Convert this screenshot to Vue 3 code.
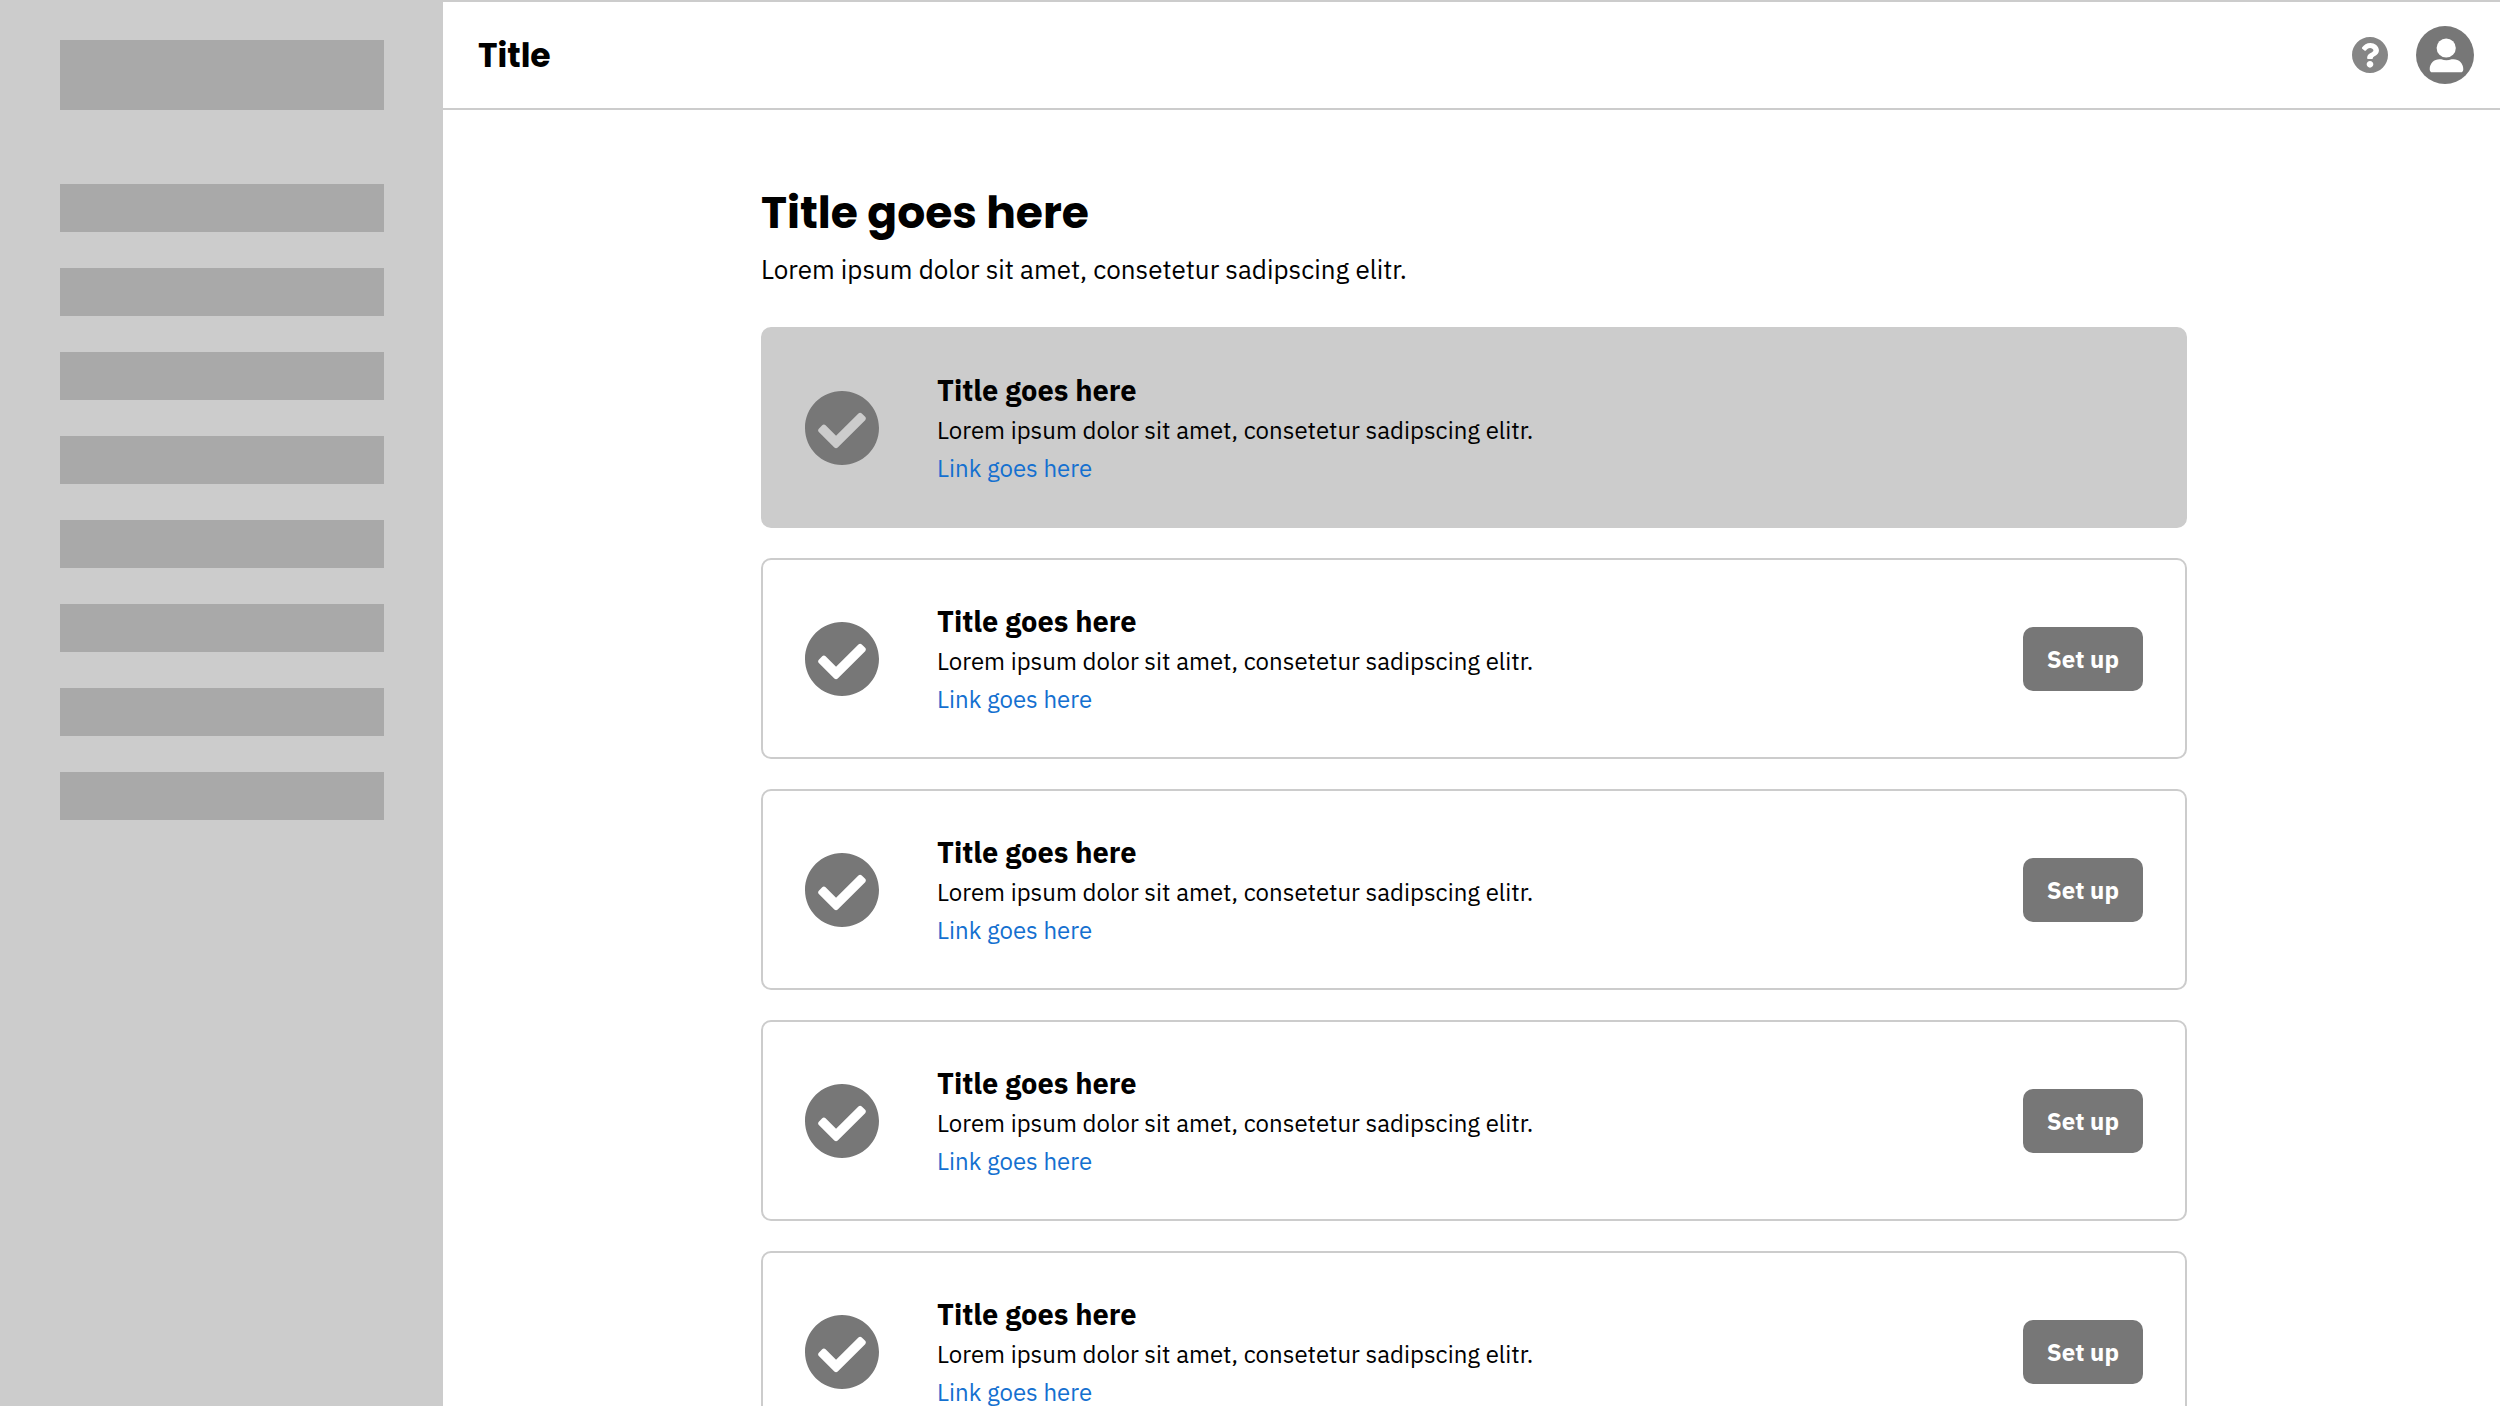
<script setup>
const navItems = Array.from({ length: 8 }, (_, i) => i)

const lorem = 'Lorem ipsum dolor sit amet, consetetur sadipscing elitr.'
const steps = [
  { id: 1, title: 'Title goes here', text: lorem, link: 'Link goes here', done: true },
  { id: 2, title: 'Title goes here', text: lorem, link: 'Link goes here', done: false },
  { id: 3, title: 'Title goes here', text: lorem, link: 'Link goes here', done: false },
  { id: 4, title: 'Title goes here', text: lorem, link: 'Link goes here', done: false },
  { id: 5, title: 'Title goes here', text: lorem, link: 'Link goes here', done: false }
]
</script>

<template>
  <div class="layout">
    <aside class="sidebar">
      <div class="logo"></div>
      <nav class="nav">
        <div v-for="item in navItems" :key="item" class="nav-item"></div>
      </nav>
    </aside>

    <div class="page">
      <header class="topbar">
        <h1 class="topbar-title">Title</h1>
        <div class="actions">
          <button class="icon-button" type="button" aria-label="Help">
            <svg class="help-icon" viewBox="8 8 496 496" aria-hidden="true">
              <path fill="#868686" d="M504 256c0 136.997-111.043 248-248 248S8 392.997 8 256C8 119.083 119.043 8 256 8s248 111.083 248 248zM262.655 90c-54.497 0-89.255 22.957-116.549 63.758-3.536 5.286-2.353 12.415 2.715 16.258l34.699 26.31c5.205 3.947 12.621 3.008 16.665-2.122 17.864-22.658 30.113-35.797 57.303-35.797 20.429 0 45.698 13.148 45.698 32.958 0 14.976-12.363 22.667-32.534 33.976C247.128 238.528 216 254.941 216 296v4c0 6.627 5.373 12 12 12h56c6.627 0 12-5.373 12-12v-1.333c0-28.462 83.186-29.647 83.186-106.667 0-58.002-60.165-102-116.531-102zM256 338c-25.365 0-46 20.635-46 46 0 25.364 20.635 46 46 46s46-20.636 46-46c0-25.364-20.635-46-46-46z" />
            </svg>
          </button>
          <button class="icon-button" type="button" aria-label="Account">
            <svg class="avatar-icon" viewBox="0 0 58 58" aria-hidden="true">
              <circle cx="29" cy="29" r="29" fill="#777" />
              <circle cx="30.2" cy="22" r="9.6" fill="#fff" />
              <path fill="#fff" d="M13.7 43.2C13.7 37.4 18 33.3 23.5 33.3h1.7q5.2 2 10.4 0h1.9C43 33.3 47.3 37.4 47.3 43.2q0 3.1-2.8 3.1H16.5q-2.8 0-2.8-3.1z" />
            </svg>
          </button>
        </div>
      </header>

      <main class="content">
        <h2 class="heading">Title goes here</h2>
        <p class="intro">{{ lorem }}</p>

        <ul class="steps">
          <li v-for="step in steps" :key="step.id" class="step" :class="{ done: step.done }">
            <svg class="check" viewBox="8 8 496 496" aria-hidden="true">
              <path d="M504 256c0 136.967-111.033 248-248 248S8 392.967 8 256 119.033 8 256 8s248 111.033 248 248zM227.314 387.314l184-184c6.248-6.248 6.248-16.379 0-22.627l-22.627-22.627c-6.248-6.248-16.379-6.249-22.628 0L216 308.118l-70.059-70.059c-6.248-6.248-16.379-6.248-22.628 0l-22.627 22.627c-6.248 6.248-6.248 16.379 0 22.627l104 104c6.249 6.249 16.379 6.249 22.628.001z" />
            </svg>
            <div class="step-body">
              <h3 class="step-title">{{ step.title }}</h3>
              <p class="step-text">{{ step.text }}</p>
              <a class="step-link" href="#">{{ step.link }}</a>
            </div>
            <button v-if="!step.done" class="setup" type="button">Set up</button>
          </li>
        </ul>
      </main>
    </div>
  </div>
</template>

<style>
body {
  margin: 0;
  background: #fff;
}
</style>

<style scoped>
.layout {
  display: flex;
  height: 100vh;
  overflow: hidden;
  color: #000;
  font-family: "IBM Plex Sans", "Liberation Sans", Arial, sans-serif;
}

.sidebar {
  box-sizing: border-box;
  flex: none;
  width: 443px;
  padding: 40px 59px 40px 60px;
  background: #ccc;
}

.logo {
  height: 70px;
  background: #a9a9a9;
}

.nav {
  display: flex;
  flex-direction: column;
  gap: 36px;
  margin-top: 74px;
}

.nav-item {
  height: 48px;
  background: #a9a9a9;
}

.page {
  display: flex;
  flex: 1;
  flex-direction: column;
  min-width: 0;
}

.topbar {
  display: flex;
  flex: none;
  align-items: center;
  justify-content: space-between;
  height: 106px;
  padding: 0 26px 0 35px;
  border-top: 2px solid #ccc;
  border-bottom: 2px solid #ccc;
}

.topbar-title,
.heading {
  margin: 0;
  font-family: Poppins, Inter, sans-serif;
  font-weight: 700;
}

.topbar-title {
  padding-top: 2px;
  font-size: 33px;
  line-height: 40px;
}

.actions {
  display: flex;
  align-items: center;
  gap: 28px;
}

.icon-button {
  display: flex;
  padding: 0;
  border: 0;
  background: none;
  cursor: pointer;
}

.help-icon {
  width: 36px;
  height: 36px;
}

.avatar-icon {
  width: 58px;
  height: 58px;
}

.content {
  flex: 1;
  min-height: 0;
  padding: 71px 313px 0 318px;
  overflow: auto;
  scrollbar-width: none;
}

.heading {
  font-size: 44px;
  line-height: 64px;
}

.intro {
  margin: 4px 0 0;
  font-size: 26px;
  line-height: 40px;
}

.steps {
  display: flex;
  flex-direction: column;
  gap: 30px;
  margin: 38px 0 0;
  padding: 0 0 48px;
  list-style: none;
}

.step {
  display: flex;
  align-items: center;
  padding: 40px 42px 39px;
  border: 2px solid #ccc;
  border-radius: 10px;
}

.step.done {
  background: #ccc;
}

.check {
  flex: none;
  width: 74px;
  height: 74px;
  margin-right: 58px;
  fill: #777;
}

.step-body {
  flex: 1;
  min-width: 0;
  font-size: 24px;
  line-height: 38px;
}

.step-title {
  margin: 0;
  font-size: 29px;
  font-weight: 700;
  line-height: 42px;
}

.step-text {
  margin: 0;
}

.step-link {
  display: block;
  width: fit-content;
  color: #1470d0;
  text-decoration: none;
}

.setup {
  flex: none;
  height: 64px;
  padding: 0 24px;
  border: 0;
  border-radius: 10px;
  background: #777;
  color: #fff;
  font-family: inherit;
  font-size: 24px;
  font-weight: 700;
  cursor: pointer;
}
</style>
